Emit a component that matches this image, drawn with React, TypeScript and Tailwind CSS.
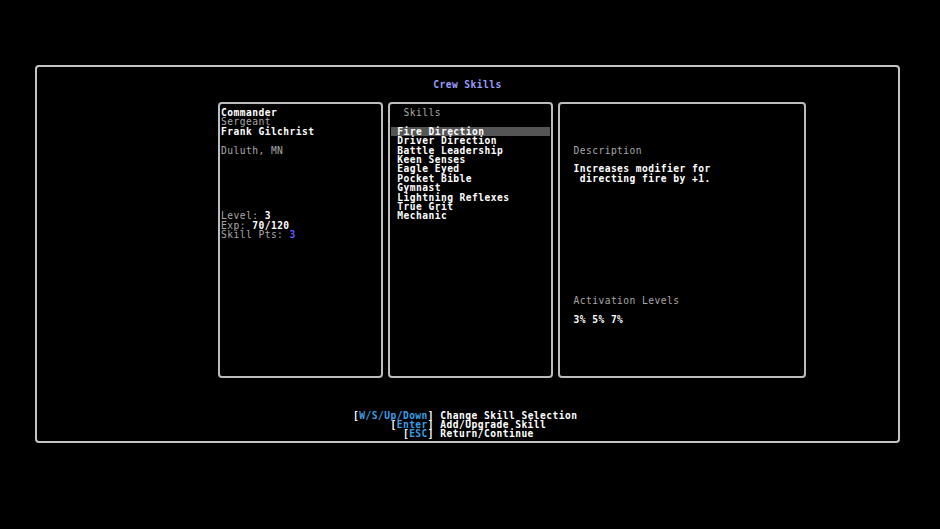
const mono = "font-['DejaVu_Sans_Mono','Liberation_Mono',monospace] text-[9.6px] tracking-[0.46px] leading-[9.4px] whitespace-pre";

const Gray = ({ children }: { children: React.ReactNode }) => (
  <span className="font-normal text-[#a9a9a9]">{children}</span>
);
const White = ({ children }: { children: React.ReactNode }) => (
  <span className="font-bold text-white">{children}</span>
);
const Key = ({ children }: { children: React.ReactNode }) => (
  <span className="font-bold text-[#3a9fe6]">{children}</span>
);

const skills = [
  "Fire Direction",
  "Driver Direction",
  "Battle Leadership",
  "Keen Senses",
  "Eagle Eyed",
  "Pocket Bible",
  "Gymnast",
  "Lightning Reflexes",
  "True Grit",
  "Mechanic",
];

const Line = ({ children }: { children?: React.ReactNode }) => (
  <div className="h-[9.4px]">{children ?? " "}</div>
);

const Blank = ({ n }: { n: number }) => (
  <>
    {Array.from({ length: n }).map((_, i) => (
      <Line key={i} />
    ))}
  </>
);

export default function App() {
  const selected = 0;

  return (
    <div className={`h-[529px] w-[940px] overflow-hidden bg-black pt-[65px] pl-[35px] ${mono}`}>
      <div className="flex h-[378px] w-[865px] flex-col rounded-[4px] border-2 border-[#c4c4c4]">
        <div className="pt-[13px] text-center">
          <span className="font-bold text-[#9c9cff]">Crew Skills</span>
        </div>

        <div className="mt-[12.6px] flex h-[276px] gap-[5px] pl-[181px]">
          {/* crew member */}
          <div className="w-[165px] rounded-[4px] border-2 border-[#bdbdbd] pt-[4px] pl-px">
            <Line><White>Commander</White></Line>
            <Line><Gray>Sergeant</Gray></Line>
            <Line><White>Frank Gilchrist</White></Line>
            <Line />
            <Line><Gray>Duluth, MN</Gray></Line>
            <Blank n={6} />
            <Line><Gray>Level: </Gray><White>3</White></Line>
            <Line><Gray>Exp: </Gray><White>70/120</White></Line>
            <Line>
              <Gray>Skill Pts: </Gray>
              <span className="font-bold text-[#5c5cff]">3</span>
            </Line>
          </div>

          {/* skill list */}
          <div className="w-[165px] rounded-[4px] border-2 border-[#bdbdbd] pt-[4px] pr-px pl-px">
            <Line><Gray>  Skills</Gray></Line>
            <Line />
            {skills.map((s, i) => (
              <div
                key={s}
                className={`h-[9.4px] ${i === selected ? "bg-[#555555]" : ""}`}
              >
                <White> {s}</White>
              </div>
            ))}
          </div>

          {/* description */}
          <div className="w-[248px] rounded-[4px] border-2 border-[#bdbdbd] pt-[4px] pl-px">
            <Blank n={4} />
            <Line><Gray>  Description</Gray></Line>
            <Line />
            <Line><White>  Increases modifier for</White></Line>
            <Line><White>   directing fire by +1.</White></Line>
            <Blank n={12} />
            <Line><Gray>  Activation Levels</Gray></Line>
            <Line />
            <Line><White>  3% 5% 7%</White></Line>
          </div>
        </div>

        <div className="mt-[32.5px] pl-[316px]">
          <Line>
            <White>[</White><Key>W/S/Up/Down</Key><White>] Change Skill Selection</White>
          </Line>
          <Line>
            <White>      [</White><Key>Enter</Key><White>] Add/Upgrade Skill</White>
          </Line>
          <Line>
            <White>        [</White><Key>ESC</Key><White>] Return/Continue</White>
          </Line>
        </div>
      </div>
    </div>
  );
}
